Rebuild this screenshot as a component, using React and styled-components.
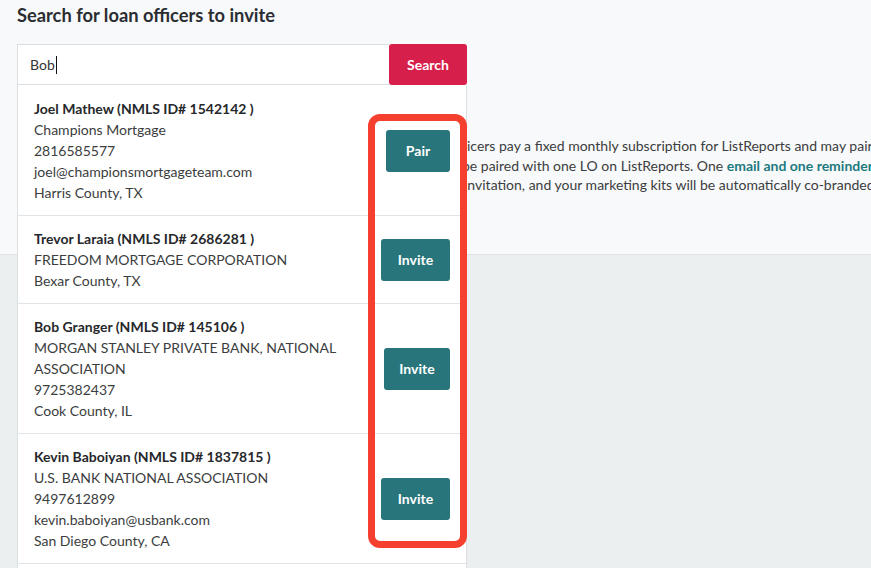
import React from "react";
import styled, { createGlobalStyle } from "styled-components";

const Global = createGlobalStyle`
  html, body { margin: 0; padding: 0; overflow: hidden; }
  body { font-family: Lato, "Open Sans", Arial, sans-serif; color: #333; }
  * { box-sizing: border-box; }
`;

const Page = styled.div`
  width: 871px;
  height: 568px;
  background: #ebeff0;
  overflow: hidden;
`;

const TopPanel = styled.section`
  height: 255px;
  background: #f8f9fa;
  border-bottom: 1px solid #dde2e5;
  padding: 4px 0 0 17px;
`;

const Heading = styled.h2`
  margin: 0;
  font-size: 18.3px;
  line-height: 22px;
  font-weight: 700;
  color: #2a2d31;
`;

const PanelRow = styled.div`
  display: flex;
  margin-top: 18px;
`;

const SearchColumn = styled.div`
  position: relative;
  width: 450px;
  flex: none;
`;

const SearchForm = styled.form`
  display: flex;
  height: 41px;
  margin: 0;
`;

const Field = styled.div`
  flex: 1;
  display: flex;
  align-items: center;
  background: #fff;
  border: 1px solid #dcdfe2;
  border-right: none;
  padding-left: 12px;
  font-size: 14px;
  color: #333;
`;

const Caret = styled.span`
  display: inline-block;
  width: 1px;
  height: 18px;
  background: #111;
  margin-left: 1px;
`;

const SearchButton = styled.button`
  width: 78px;
  border: none;
  border-radius: 3px;
  background: #d71f4c;
  color: #fff;
  font-family: inherit;
  font-size: 14px;
  font-weight: 700;
  padding: 0;
`;

const Dropdown = styled.ul`
  position: absolute;
  top: 41px;
  left: 0;
  width: 450px;
  margin: 0;
  padding: 1px 0 20px;
  list-style: none;
  background: #fff;
  border-left: 1px solid #dcdfe2;
  border-right: 1px solid #dcdfe2;
  z-index: 2;
`;

const ResultRow = styled.li`
  display: flex;
  align-items: center;
  justify-content: space-between;
  padding: 12px 16px 12px 16px;
  border-bottom: 1px solid #e2e5e8;
`;

const Details = styled.div`
  font-size: 14px;
  line-height: 21px;
  color: #3b3d40;
`;

const Name = styled.div`
  font-weight: 700;
  color: #26282b;
`;

const ActionButton = styled.button`
  width: ${(p) => p.$w}px;
  height: 42px;
  border: none;
  border-radius: 3px;
  background: #28767c;
  color: #fff;
  font-family: inherit;
  font-size: 14px;
  font-weight: 700;
  padding: 0;
  flex: none;
`;

const Highlight = styled.div`
  position: absolute;
  left: 350px;
  top: 29px;
  width: 99px;
  height: 434px;
  border: 7px solid #f5402f;
  border-radius: 12px;
  pointer-events: none;
  z-index: 3;
`;

const Description = styled.div`
  flex: 1;
  overflow: hidden;
  padding-top: 92px;
  font-size: 14px;
  line-height: 19.5px;
  color: #3b3d40;
`;

const DescLine = styled.div`
  white-space: nowrap;
  margin-left: ${(p) => p.$shift || 0}px;
`;

const Emphasis = styled.strong`
  color: #1e7a80;
  font-weight: 700;
`;

const results = [
  {
    name: "Joel Mathew (NMLS ID# 1542142 )",
    lines: ["Champions Mortgage", "2816585577", "joel@championsmortgageteam.com", "Harris County, TX"],
    action: "Pair",
    w: 64,
  },
  {
    name: "Trevor Laraia (NMLS ID# 2686281 )",
    lines: ["FREEDOM MORTGAGE CORPORATION", "Bexar County, TX"],
    action: "Invite",
    w: 69,
  },
  {
    name: "Bob Granger (NMLS ID# 145106 )",
    lines: ["MORGAN STANLEY PRIVATE BANK, NATIONAL", "ASSOCIATION", "9725382437", "Cook County, IL"],
    action: "Invite",
    w: 66,
  },
  {
    name: "Kevin Baboiyan (NMLS ID# 1837815 )",
    lines: ["U.S. BANK NATIONAL ASSOCIATION", "9497612899", "kevin.baboiyan@usbank.com", "San Diego County, CA"],
    action: "Invite",
    w: 69,
  },
];

export default function App() {
  return (
    <Page>
      <Global />
      <TopPanel>
        <Heading>Search for loan officers to invite</Heading>
        <PanelRow>
          <SearchColumn>
            <SearchForm onSubmit={(e) => e.preventDefault()}>
              <Field>
                Bob
                <Caret />
              </Field>
              <SearchButton type="submit">Search</SearchButton>
            </SearchForm>
            <Dropdown>
              {results.map((r) => (
                <ResultRow key={r.name}>
                  <Details>
                    <Name>{r.name}</Name>
                    {r.lines.map((l) => (
                      <div key={l}>{l}</div>
                    ))}
                  </Details>
                  <ActionButton type="button" $w={r.w}>
                    {r.action}
                  </ActionButton>
                </ResultRow>
              ))}
              <Highlight />
            </Dropdown>
          </SearchColumn>
          <Description>
            <DescLine>icers pay a fixed monthly subscription for ListReports and may pair with</DescLine>
            <DescLine $shift={-5}>
              be paired with one LO on ListReports. One <Emphasis>email and one reminder</Emphasis> will be sent
            </DescLine>
            <DescLine $shift={-3}>invitation, and your marketing kits will be automatically co-branded with</DescLine>
          </Description>
        </PanelRow>
      </TopPanel>
    </Page>
  );
}
